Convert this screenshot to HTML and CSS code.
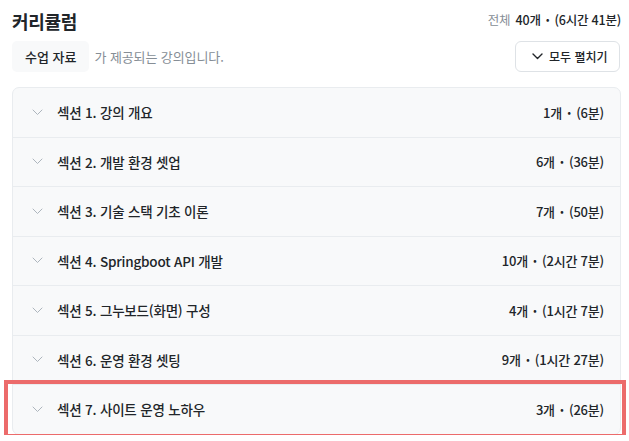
FILE: index.html
```html
<!DOCTYPE html>
<html lang="ko">
<head>
<meta charset="utf-8">
<title>커리큘럼</title>
<link rel="stylesheet" href="styles.css">
</head>
<body>
<header class="head">
  <h2 class="title">커리큘럼</h2>
  <div class="total"><span class="total-label">전체</span> 40개 <span class="dot">•</span> (6시간 41분)</div>
</header>
<div class="toolbar">
  <div class="notice"><span class="badge">수업 자료</span><span class="notice-text">가 제공되는 강의입니다.</span></div>
  <button class="expand" type="button"><svg class="expand-icon" width="11" height="7" viewBox="0 0 11 7"><path d="M1 1l4.5 4.5L10 1" fill="none" stroke="#212529" stroke-width="1.4" stroke-linecap="round" stroke-linejoin="round"/></svg>모두 펼치기</button>
</div>
<ul class="sections">
  <li class="section"><svg class="chev" width="11" height="7" viewBox="0 0 11 7"><path d="M1 1l4.5 4.5L10 1" fill="none" stroke="#adb5bd" stroke-width="1" stroke-linecap="round" stroke-linejoin="round"/></svg><span class="name">섹션 1. 강의 개요</span><span class="meta">1개 <span class="dot">•</span> (6분)</span></li>
  <li class="section"><svg class="chev" width="11" height="7" viewBox="0 0 11 7"><path d="M1 1l4.5 4.5L10 1" fill="none" stroke="#adb5bd" stroke-width="1" stroke-linecap="round" stroke-linejoin="round"/></svg><span class="name">섹션 2. 개발 환경 셋업</span><span class="meta">6개 <span class="dot">•</span> (36분)</span></li>
  <li class="section"><svg class="chev" width="11" height="7" viewBox="0 0 11 7"><path d="M1 1l4.5 4.5L10 1" fill="none" stroke="#adb5bd" stroke-width="1" stroke-linecap="round" stroke-linejoin="round"/></svg><span class="name">섹션 3. 기술 스택 기초 이론</span><span class="meta">7개 <span class="dot">•</span> (50분)</span></li>
  <li class="section"><svg class="chev" width="11" height="7" viewBox="0 0 11 7"><path d="M1 1l4.5 4.5L10 1" fill="none" stroke="#adb5bd" stroke-width="1" stroke-linecap="round" stroke-linejoin="round"/></svg><span class="name">섹션 4. Springboot API 개발</span><span class="meta">10개 <span class="dot">•</span> (2시간 7분)</span></li>
  <li class="section"><svg class="chev" width="11" height="7" viewBox="0 0 11 7"><path d="M1 1l4.5 4.5L10 1" fill="none" stroke="#adb5bd" stroke-width="1" stroke-linecap="round" stroke-linejoin="round"/></svg><span class="name">섹션 5. 그누보드(화면) 구성</span><span class="meta">4개 <span class="dot">•</span> (1시간 7분)</span></li>
  <li class="section"><svg class="chev" width="11" height="7" viewBox="0 0 11 7"><path d="M1 1l4.5 4.5L10 1" fill="none" stroke="#adb5bd" stroke-width="1" stroke-linecap="round" stroke-linejoin="round"/></svg><span class="name">섹션 6. 운영 환경 셋팅</span><span class="meta">9개 <span class="dot">•</span> (1시간 27분)</span></li>
  <li class="section highlighted"><svg class="chev" width="11" height="7" viewBox="0 0 11 7"><path d="M1 1l4.5 4.5L10 1" fill="none" stroke="#adb5bd" stroke-width="1" stroke-linecap="round" stroke-linejoin="round"/></svg><span class="name">섹션 7. 사이트 운영 노하우</span><span class="meta">3개 <span class="dot">•</span> (26분)</span></li>
</ul>
</body>
</html>
```
FILE: styles.css
```css
* { box-sizing: border-box; }
html, body { background: #ffffff; }
body {
  margin: 0;
  padding: 8px 8px 0 12px;
  font-family: "Noto Sans CJK KR", "Noto Sans", sans-serif;
  color: #212529;
  overflow: hidden;
}
.head {
  display: flex;
  justify-content: space-between;
  align-items: flex-start;
}
.title {
  margin: 0;
  font-size: 18px;
  line-height: 26px;
  font-weight: 700;
  letter-spacing: -0.3px;
}
.total {
  font-size: 12.5px;
  line-height: 16px;
  margin-top: 4px;
  color: #212529;
  font-weight: 500;
  letter-spacing: -0.2px;
}
.total-label {
  color: #868e96;
  font-weight: 400;
  margin-right: 2px;
}
.dot { font-size: 9px; font-weight: 700; vertical-align: 2px; margin: 0 2px; }
.toolbar {
  display: flex;
  justify-content: space-between;
  align-items: center;
  margin-top: 7px;
}
.notice { display: flex; align-items: center; }
.badge {
  display: inline-flex;
  align-items: center;
  height: 31px;
  padding: 0 13px;
  background: #f8f9fa;
  border-radius: 5px;
  font-size: 13px;
  font-weight: 500;
  color: #212529;
}
.notice-text {
  margin-left: 5px;
  font-size: 13px;
  color: #868e96;
  letter-spacing: -0.1px;
}
.expand {
  display: inline-flex;
  align-items: center;
  height: 31px;
  width: 105px;
  padding: 0 0 0 16px;
  border: 1px solid #dee2e6;
  border-radius: 6px;
  background: #fff;
  font-family: inherit;
  font-size: 12px;
  font-weight: 500;
  color: #212529;
  margin-right: 1px;
}
.expand-icon { margin-right: 6px; }
.sections {
  list-style: none;
  margin: 15px 0 0;
  padding: 0;
  border: 1px solid #e9ecef;
  border-radius: 7px;
  background: #f8f9fa;
}
.section {
  position: relative;
  display: flex;
  align-items: center;
  height: 49.5px;
  padding: 0 16px 0 19px;
  border-top: 1px solid #e9ecef;
}
.section:first-child { border-top: none; height: 48.5px; }
.chev { flex: none; margin-right: 14px; }
.name {
  flex: 1;
  font-size: 13.5px;
  font-weight: 500;
  letter-spacing: -0.2px;
}
.meta {
  font-size: 13px;
  font-weight: 500;
  letter-spacing: -0.2px;
}
.highlighted::after {
  content: "";
  position: absolute;
  left: -9px;
  right: -6px;
  top: -5px;
  bottom: -4px;
  border: 4px solid #ec6b6b;
  pointer-events: none;
}
```
